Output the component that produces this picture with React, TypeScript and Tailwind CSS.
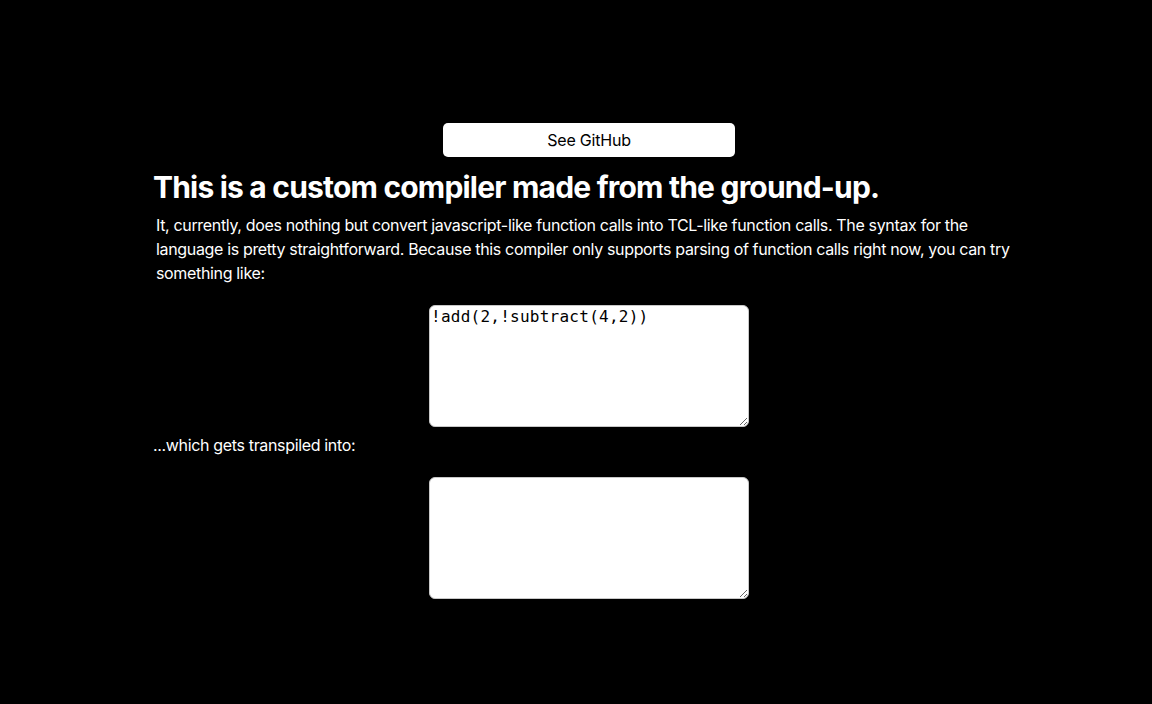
export default function App() {
  return (
    <div className="min-h-screen bg-black text-white font-['Inter','Liberation_Sans',sans-serif]">
      <div className="ml-[153px] flex w-[872px] flex-col pt-[123px]">
        <button className="h-[34px] w-[292px] self-center rounded-[5px] bg-white text-[16px] tracking-[-0.2px] text-black">
          See GitHub
        </button>
        <h1 className="mt-3 text-[30px] leading-[36px] font-bold tracking-[-0.8px]">
          This is a custom compiler made from the ground-up.
        </h1>
        <p className="mt-[8px] pl-[3px] text-[16px] leading-6 tracking-[-0.34px]">
          It, currently, does nothing but convert javascript-like function calls into TCL-like function calls. The
          syntax for the language is pretty straightforward. Because this compiler only supports parsing of function
          calls right now, you can try something like:
        </p>
        <div className="mt-[20px] flex justify-center">
          <textarea
            defaultValue="!add(2,!subtract(4,2))"
            className="h-[122px] w-[320px] rounded-[6px] border border-[#c8c8c8] bg-white p-[1px] font-['DejaVu_Sans_Mono',monospace] text-[16px] leading-5 tracking-[0.25px] text-black"
          />
        </div>
        <p className="mt-[6px] text-[16px] leading-6 tracking-[-0.34px]">...which gets transpiled into:</p>
        <div className="mt-[20px] flex justify-center">
          <textarea className="h-[122px] w-[320px] rounded-[6px] border border-[#c8c8c8] bg-white p-[1px] font-['DejaVu_Sans_Mono',monospace] text-[16px] leading-5 text-black" />
        </div>
      </div>
    </div>
  );
}
